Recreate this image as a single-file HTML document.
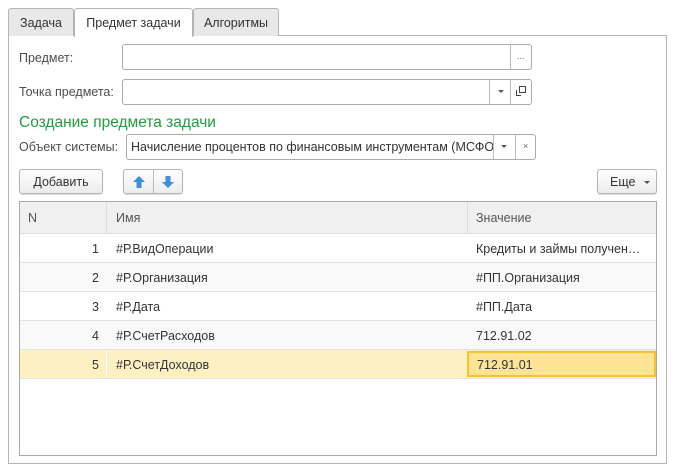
<html><head><style>
*{box-sizing:border-box;margin:0;padding:0}
body{width:673px;height:470px;background:#fff;font-family:"Liberation Sans",sans-serif;font-size:12px;color:#4d4d4d;position:relative;overflow:hidden}
.a{position:absolute}
.tab{position:absolute;top:8px;height:28px;border:1px solid #b5b5b5;border-bottom:none;background:#e8e8e8;border-radius:3px 3px 0 0;padding:7px 0 0;text-align:center;font-size:12.5px;color:#333}
.inp{position:absolute;border:1px solid #aaa;border-radius:3px;background:#fff;height:26px}
.btn{position:absolute;border:1px solid #b5b5b5;border-radius:3px;background:linear-gradient(#fff,#ececec);box-shadow:0 1px 1px rgba(0,0,0,.15);color:#333;font-size:12.5px;text-align:center}
.sep{position:absolute;top:0;bottom:0;border-left:1px solid #bbb}
.row{position:absolute;left:20px;width:636px;height:29px;border-bottom:1px solid #e2e2e2;font-size:12.5px;color:#333}
.row span{position:absolute;top:8px}
</style></head><body>
<div class="a" style="left:8px;top:35px;width:659px;height:429px;border:1px solid #b5b5b5"></div>
<div class="tab" style="left:8px;width:66px">Задача</div>
<div class="tab" style="left:74px;width:119px;background:#fff;height:29px;z-index:2">Предмет задачи</div>
<div class="tab" style="left:193px;width:86px">Алгоритмы</div>

<div class="a" style="left:19px;top:51px;font-size:12.5px">Предмет:</div>
<div class="inp" style="left:122px;top:44px;width:410px"><div class="sep" style="left:387px"></div><span class="a" style="left:394px;top:6px;font-size:9px;color:#666">...</span></div>
<div class="a" style="left:19px;top:85px;font-size:12.5px">Точка предмета:</div>
<div class="inp" style="left:122px;top:79px;width:410px"><div class="sep" style="left:366px"></div><div class="sep" style="left:387px"></div>
<span class="a" style="left:375px;top:10px;border:3px solid transparent;border-top:3px solid #555"></span>
<span class="a" style="left:396px;top:6px;width:7px;height:7px;border:1px solid #444"></span><span class="a" style="left:393px;top:10px;width:5px;height:6px;border-left:1px solid #444;border-bottom:1px solid #444"></span></div>
<div class="a" style="left:19px;top:114px;font-size:15.5px;color:#1f9e3e">Создание предмета задачи</div>
<div class="a" style="left:19px;top:140px;font-size:12.5px">Объект системы:</div>
<div class="inp" style="left:126px;top:134px;width:410px;overflow:hidden"><span class="a" style="left:4px;top:5px;font-size:12.5px;color:#333;white-space:nowrap;width:362px;overflow:hidden">Начисление процентов по финансовым инструментам (МСФО)</span><div class="sep" style="left:366px"></div><div class="sep" style="left:388px"></div>
<span class="a" style="left:374px;top:10px;border:3px solid transparent;border-top:3px solid #555"></span><span class="a" style="left:396px;top:6px;font-size:9px;color:#666">×</span></div>

<div class="btn" style="left:19px;top:169px;width:84px;height:25px;padding-top:5px">Добавить</div>
<div class="btn" style="left:123px;top:169px;width:60px;height:25px">
<div class="sep" style="left:29px"></div>
<svg class="a" style="left:8px;top:5px" width="14" height="14"><path d="M7 1L13 7H9.5V13H4.5V7H1Z" fill="#3d8fd6"/></svg>
<svg class="a" style="left:37px;top:5px" width="14" height="14"><path d="M7 13L13 7H9.5V1H4.5V7H1Z" fill="#3d8fd6"/></svg></div>
<div class="btn" style="left:597px;top:169px;width:60px;height:25px;padding:5px 0 0 12px;text-align:left">Еще<span class="a" style="left:46px;top:11px;border:3px solid transparent;border-top:3px solid #555"></span></div>

<div class="a" style="left:19px;top:201px;width:638px;height:255px;border:1px solid #a8a8a8"></div>
<div class="row" style="top:202px;height:32px;background:#f0f0f0;border-bottom:1px solid #ddd;color:#555"><span style="left:8px;top:9px">N</span><span style="left:96px;top:9px">Имя</span><span style="left:456px;top:9px">Значение</span><div class="sep" style="left:86px;border-color:#ddd"></div><div class="sep" style="left:447px;border-color:#ddd"></div></div>
<div class="row" style="top:234px;background:#fff"><span style="left:72px">1</span><span style="left:96px">#Р.ВидОперации</span><span style="left:456px">Кредиты и займы получен…</span></div>
<div class="row" style="top:263px;background:#f9f9f9"><span style="left:72px">2</span><span style="left:96px">#Р.Организация</span><span style="left:456px">#ПП.Организация</span></div>
<div class="row" style="top:292px;background:#fff"><span style="left:72px">3</span><span style="left:96px">#Р.Дата</span><span style="left:456px">#ПП.Дата</span></div>
<div class="row" style="top:321px;background:#f9f9f9"><span style="left:72px">4</span><span style="left:96px">#Р.СчетРасходов</span><span style="left:456px">712.91.02</span></div>
<div class="row" style="top:350px;background:#fdf1c4"><div class="sep" style="left:86px;border-color:#fff"></div><span style="left:72px">5</span><span style="left:96px">#Р.СчетДоходов</span>
<div class="a" style="left:447px;top:1px;width:189px;height:26px;background:#fde495;border:2px solid #f5c42c"><span style="left:8px;top:5px">712.91.01</span></div></div>
</body></html>
